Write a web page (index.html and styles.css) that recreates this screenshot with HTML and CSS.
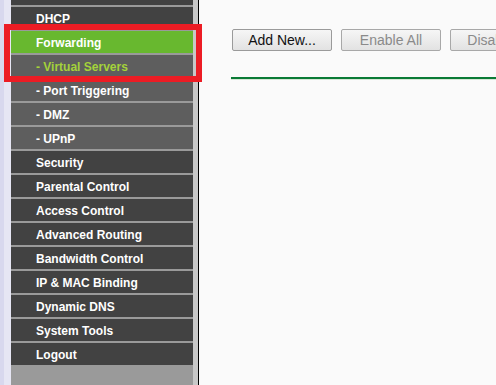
FILE: index.html
```html
<!DOCTYPE html>
<html>
    <head>
        <link rel="stylesheet" href="styles.css">
    </head>
    <body>
        <div class="side">
            <div class="edge"></div>
            <div class="menu">
                <div class="row top"></div>
                <div class="row">DHCP</div>
                <div class="row active">Forwarding</div>
                <div class="row sub current">- Virtual Servers</div>
                <div class="row sub">- Port Triggering</div>
                <div class="row sub">- DMZ</div>
                <div class="row sub">- UPnP</div>
                <div class="row">Security</div>
                <div class="row">Parental Control</div>
                <div class="row">Access Control</div>
                <div class="row">Advanced Routing</div>
                <div class="row">Bandwidth Control</div>
                <div class="row">IP &amp; MAC Binding</div>
                <div class="row">Dynamic DNS</div>
                <div class="row">System Tools</div>
                <div class="row">Logout</div>
            </div>
            <div class="rail"></div>
        </div>
        <div class="main">
            <div class="buttons">
                <button class="btn">Add New...</button>
                <button class="btn off">Enable All</button>
                <button class="btn off">Disable All</button>
            </div>
            <div class="line"></div>
        </div>
        <div class="mark"></div>
    </body>
</html>
```
FILE: styles.css
```css
body {
    margin: 0;
    height: 385px;
    overflow: hidden;
    display: flex;
    background-color: #fafafa;
    font-family: Arial, "Liberation Sans", sans-serif;
}

.side {
    display: flex;
    flex: none;
    width: 199px;
    border-right: 1px solid #000;
    box-sizing: border-box;
}

.edge {
    width: 7px;
    border-left: 4px solid #d8d8ee;
    background-color: #e6e6f4;
}

.menu {
    width: 182px;
    background-color: #9a9a9a;
}

.row {
    height: 22px;
    line-height: 24px;
    overflow: hidden;
    margin-bottom: 2px;
    padding-left: 25px;
    background-color: #424242;
    color: #fff;
    font-size: 12px;
    font-weight: bold;
    white-space: nowrap;
}

.row.top {
    height: 5px;
}

.row.active {
    background-color: #68b82f;
}

.row.sub {
    background-color: #5e5e5e;
}

.row.current {
    color: #a4d23a;
}

.rail {
    width: 5px;
    background-color: #c8c8c8;
}

.main {
    flex: 1;
    padding: 29px 0 0 32px;
    overflow: hidden;
}

.buttons {
    display: flex;
    gap: 9px;
    padding-left: 1px;
    white-space: nowrap;
}

.btn {
    flex: none;
    width: 100px;
    height: 22px;
    padding: 0;
    border: 1px solid #9a9a9a;
    border-radius: 2px;
    background: linear-gradient(#f6f6f6, #e2e2e2);
    color: #111;
    font-family: Arial, "Liberation Sans", sans-serif;
    font-size: 14px;
}

.btn.off {
    color: #8a8a8a;
    border-color: #a8a8a8;
}

.line {
    margin-top: 26px;
    height: 1px;
    border-top: 2px solid #0a7a35;
    background-color: #d6e6d6;
}

.mark {
    position: absolute;
    left: 4px;
    top: 24px;
    width: 186px;
    height: 46px;
    border: 6px solid #ec1c24;
}
```
